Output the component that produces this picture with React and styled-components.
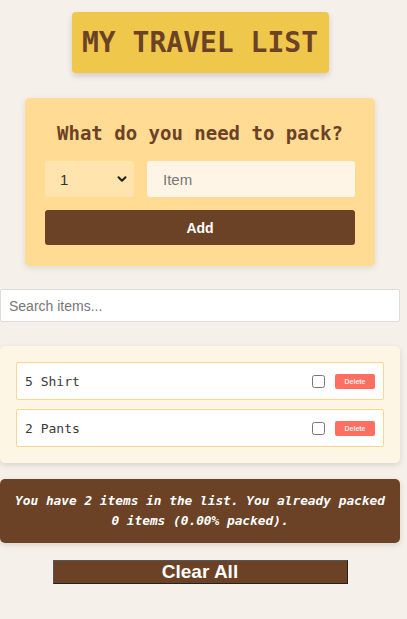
import React from "react";
import styled, { createGlobalStyle } from "styled-components";

const items = [
  { id: 1, qty: 5, name: "Shirt" },
  { id: 2, qty: 2, name: "Pants" },
];

export default function App() {
  return (
    <>
      <GlobalStyle />
      <Container>
        <Header>
          <h1>MY TRAVEL LIST</h1>
        </Header>

        <Form onSubmit={(e) => e.preventDefault()}>
          <h3>What do you need to pack?</h3>
          <div className="fields">
            <Select defaultValue="1">
              {[1, 2, 3, 4, 5].map((n) => (
                <option key={n} value={n}>{n}</option>
              ))}
            </Select>
            <ItemInput placeholder="Item" />
          </div>
          <AddButton type="submit">Add</AddButton>
        </Form>

        <Search placeholder="Search items..." />

        <List>
          {items.map((item) => (
            <Row key={item.id}>
              <span>{item.qty} {item.name}</span>
              <div className="actions">
                <input type="checkbox" />
                <DeleteButton>Delete</DeleteButton>
              </div>
            </Row>
          ))}
        </List>

        <Stats>
          You have 2 items in the list. You already packed 0 items (0.00% packed).
        </Stats>

        <ClearButton>Clear All</ClearButton>
      </Container>
    </>
  );
}

const GlobalStyle = createGlobalStyle`
  body {
    margin: 0;
    background-color: #f5f0e9;
    font-family: "DejaVu Sans Mono", "Liberation Mono", monospace;
  }
`;

const Container = styled.div`
  width: 400px;
  display: flex;
  flex-direction: column;
  align-items: center;
  padding-top: 12px;
`;

const Header = styled.div`
  width: 257px;
  height: 61px;
  display: flex;
  align-items: center;
  justify-content: center;
  background-color: #eec74b;
  border-radius: 4px;
  box-shadow: 0 3px 6px rgba(0, 0, 0, 0.15);
  h1 {
    margin: 0;
    font-size: 28px;
    font-weight: bold;
    color: #6b4226;
    white-space: nowrap;
  }
`;

const Form = styled.form`
  box-sizing: border-box;
  width: 350px;
  margin-top: 25px;
  padding: 23px 20px 21px;
  background-color: #ffdb93;
  border-radius: 5px;
  box-shadow: 0 2px 6px rgba(0, 0, 0, 0.1);
  h3 {
    margin: 0 0 16px;
    text-align: center;
    font-size: 19px;
    line-height: 24px;
    color: #6b4226;
    white-space: nowrap;
  }
  .fields {
    display: flex;
    gap: 13px;
    margin-bottom: 13px;
  }
`;

const Select = styled.select`
  flex: 0 0 89px;
  height: 36px;
  border: none;
  border-radius: 3px;
  background-color: #ffe4ad;
  font-family: "Liberation Sans", Arial, sans-serif;
  font-size: 15px;
  color: #333;
  padding: 0 10px 0 15px;
  appearance: none;
  background-image: url("data:image/svg+xml;utf8,<svg xmlns='http://www.w3.org/2000/svg' width='14' height='14' viewBox='0 0 24 24' fill='none' stroke='%23222' stroke-width='3.5' stroke-linecap='round' stroke-linejoin='round'><polyline points='6 9 12 15 18 9'/></svg>");
  background-repeat: no-repeat;
  background-position: right 5px center;
`;

const ItemInput = styled.input`
  flex: 1;
  min-width: 0;
  height: 36px;
  box-sizing: border-box;
  border: none;
  border-radius: 3px;
  background-color: #fff5e6;
  padding: 0 16px;
  font-family: "Liberation Sans", Arial, sans-serif;
  font-size: 15px;
  &::placeholder {
    color: #777;
  }
`;

const AddButton = styled.button`
  width: 100%;
  height: 35px;
  border: none;
  border-radius: 3px;
  background-color: #6b4226;
  color: white;
  font-family: "Liberation Sans", Arial, sans-serif;
  font-weight: bold;
  font-size: 14px;
`;

const Search = styled.input`
  box-sizing: border-box;
  width: 100%;
  height: 33px;
  margin-top: 23px;
  padding: 0 8px;
  border: 1px solid #ddd;
  border-radius: 2px;
  background: white;
  font-family: "Liberation Sans", Arial, sans-serif;
  font-size: 14px;
  &::placeholder {
    color: #777;
  }
`;

const List = styled.ul`
  box-sizing: border-box;
  width: 100%;
  margin: 24px 0 0;
  padding: 16px 16px 16px;
  list-style: none;
  display: flex;
  flex-direction: column;
  gap: 9px;
  background-color: #fef6e4;
  border-radius: 5px;
  box-shadow: 0 2px 6px rgba(0, 0, 0, 0.12);
`;

const Row = styled.li`
  display: flex;
  align-items: center;
  justify-content: space-between;
  height: 38px;
  box-sizing: border-box;
  padding: 0 8px;
  background: white;
  border: 1px solid #ffd68c;
  border-radius: 2px;
  span {
    font-size: 13px;
    color: #3a3a3a;
  }
  .actions {
    display: flex;
    align-items: center;
    gap: 10px;
  }
  input[type="checkbox"] {
    margin: 0;
    width: 13px;
    height: 13px;
  }
`;

const DeleteButton = styled.button`
  width: 40px;
  height: 15px;
  padding: 0;
  border: none;
  border-radius: 2px;
  background-color: #ff6f61;
  color: #ffe9e6;
  font-family: "Liberation Sans", Arial, sans-serif;
  font-size: 7px;
  font-weight: bold;
`;

const Stats = styled.footer`
  box-sizing: border-box;
  width: 100%;
  margin-top: 16px;
  padding: 12px 14px;
  background-color: #6b4226;
  color: white;
  border-radius: 5px;
  box-shadow: 0 2px 6px rgba(0, 0, 0, 0.12);
  text-align: center;
  font-style: italic;
  font-weight: bold;
  font-size: 12.8px;
  line-height: 20px;
`;

const ClearButton = styled.button`
  width: 295px;
  height: 24px;
  margin-top: 17px;
  padding: 0;
  background-color: #6b4226;
  color: white;
  border: 1px solid #222;
  border-top-color: #555;
  border-left-color: #555;
  font-family: "Liberation Sans", Arial, sans-serif;
  font-weight: bold;
  font-size: 19px;
  line-height: 20px;
`;
